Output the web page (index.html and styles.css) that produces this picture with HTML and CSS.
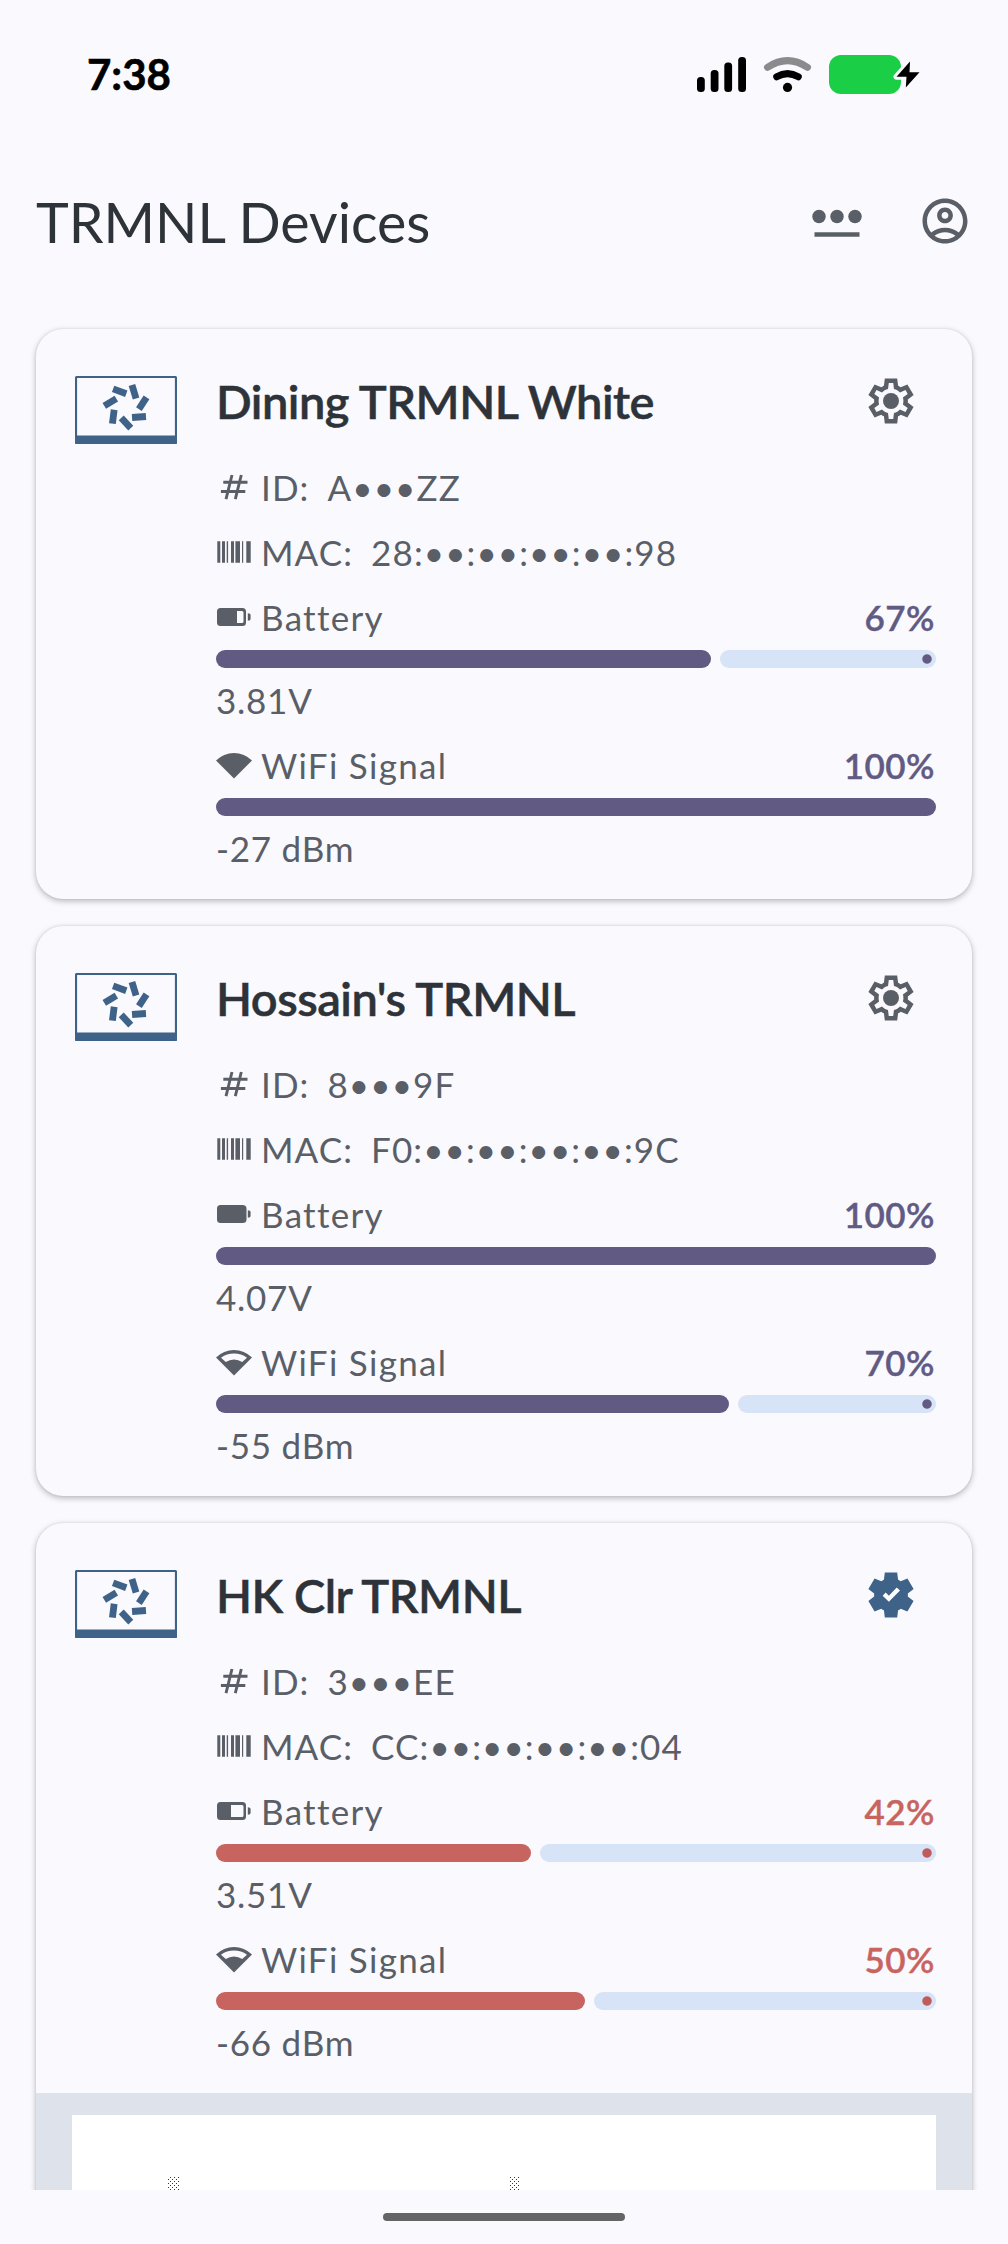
FILE: index.html
```html
<!DOCTYPE html>
<html lang="en">
<head>
<meta charset="utf-8">
<title>TRMNL Devices</title>
<link rel="stylesheet" href="styles.css">
</head>
<body>
<svg class="defs" aria-hidden="true">
  <defs>
    <symbol id="device" viewBox="0 0 102 68">
      <rect x="1" y="1" width="100" height="66" rx="1" fill="none" stroke="currentColor" stroke-width="2.2"/>
      <rect x="0" y="59.5" width="102" height="8.5" rx="1"/>
      <rect x="-7" y="-3.4" width="14" height="6.8" transform="translate(44.7 15.3) rotate(20)"/>
      <rect x="-7" y="-3.4" width="14" height="6.8" transform="translate(59 15.7) rotate(73)"/>
      <rect x="-7" y="-3.4" width="14" height="6.8" transform="translate(67.7 27.3) rotate(123)"/>
      <rect x="-7" y="-3.4" width="14" height="6.8" transform="translate(64 41) rotate(176)"/>
      <rect x="-7" y="-3.4" width="14" height="6.8" transform="translate(51 47) rotate(227)"/>
      <rect x="-7" y="-3.4" width="14" height="6.8" transform="translate(38.3 40.7) rotate(277)"/>
      <rect x="-7" y="-3.4" width="14" height="6.8" transform="translate(35.3 26.3) rotate(329)"/>
    </symbol>
    <symbol id="gear" viewBox="0 -960 960 960">
      <path d="m370-80-16-128q-13-5-24.500-12T307-235l-119 50L78-375l103-78q-1-7-1-13.500v-27q0-6.500 1-13.500L78-585l110-190 119 50q11-8 23-15t24-12l16-128h220l16 128q13 5 24.500 12t22.500 15l119-50 110 190-103 78q1 7 1 13.500v27q0 6.500-2 13.500l103 78-110 190-118-50q-11 8-23 15t-24 12L590-80H370Zm70-80h79l14-106q31-8 57.500-23.500T639-327l99 41 39-68-86-65q5-14 7-29.500t2-31.500q0-16-2-31.500t-7-29.500l86-65-39-68-99 42q-22-23-48.500-38.500T533-694l-13-106h-79l-14 106q-31 8-57.500 23.500T321-633l-99-41-39 68 86 64q-5 15-7 30t-2 32q0 16 2 31t7 30l-86 65 39 68 99-42q22 23 48.500 38.500T427-266l13 106Z"/>
      <circle cx="480" cy="-480" r="142"/>
    </symbol>
    <symbol id="gear-check" viewBox="0 -960 960 960">
      <path d="m370-80-16-128q-13-5-24.500-12T307-235l-119 50L78-375l103-78q-1-7-1-13.500v-27q0-6.500 1-13.500L78-585l110-190 119 50q11-8 23-15t24-12l16-128h220l16 128q13 5 24.500 12t22.500 15l119-50 110 190-103 78q1 7 1 13.500v27q0 6.500-2 13.500l103 78-110 190-118-50q-11 8-23 15t-24 12L590-80H370Z"/>
      <path class="check" d="M332-468l54-56 56 56 140-146 58 54-198 202z"/>
    </symbol>
    <symbol id="tag" viewBox="0 0 36 36">
      <path d="M7.300 13.200H31.500M4.900 22.500H29.300M16 6L10 30.200M25.300 6L19.300 30.200" fill="none" stroke="currentColor" stroke-width="2.900"/>
    </symbol>
    <symbol id="barcode" viewBox="0 0 36 36">
      <path d="M1.300 7.300h3v21.500h-3zM6 7.300h3v21.500H6zM10.700 7.300h1.400v21.500h-1.400zM15 7.300h3v21.500h-3zM19.400 7.300h4.600v21.500h-4.600zM26 7.300h1.200v21.500H26zM30.300 7.300h4.400v21.500h-4.400z"/>
    </symbol>
    <symbol id="bat-67" viewBox="0 0 36 36">
      <path fill-rule="evenodd" d="M4.500 9H26.500q3.500 0 3.500 3.500V23.500q0 3.500-3.500 3.500H4.500q-3.500 0-3.500-3.500V12.500q0-3.500 3.500-3.500zM21 12V24H26q1.500 0 1.500-1.500V13.500q0-1.500-1.500-1.500z"/>
      <path d="M31.800 14.300q2.800 0 2.800 2.200V19.500q0 2.200-2.800 2.200z"/>
    </symbol>
    <symbol id="bat-100" viewBox="0 0 36 36">
      <path d="M4.500 9H26.500q4 0 4 3.500V23.500q0 3.500-4 3.500H4.500q-3.500 0-3.500-3.500V12.500q0-3.500 3.500-3.500z"/>
      <path d="M31.800 14.300q2.800 0 2.800 2.200V19.500q0 2.200-2.800 2.200z"/>
    </symbol>
    <symbol id="bat-42" viewBox="0 0 36 36">
      <path fill-rule="evenodd" d="M4.500 9H26.500q3.500 0 3.500 3.500V23.500q0 3.500-3.500 3.500H4.500q-3.500 0-3.500-3.500V12.500q0-3.500 3.500-3.500zM15 12V24H26q1.500 0 1.500-1.500V13.500q0-1.500-1.500-1.500z"/>
      <path d="M31.800 14.300q2.800 0 2.800 2.200V19.500q0 2.200-2.800 2.200z"/>
    </symbol>
    <symbol id="wifi-full" viewBox="0 0 36 36">
      <path d="M0 13.500A25.500 25.500 0 0 1 36 13.500L18 31.500z"/>
    </symbol>
    <symbol id="wifi-mid" viewBox="0 0 36 36">
      <path fill-rule="evenodd" d="M0 13.500A25.500 25.500 0 0 1 36 13.500L18 31.500zM5 13.700L9.800 18A14.500 14.500 0 0 1 26.200 18L31 13.700A22.500 22.500 0 0 0 5 13.700z"/>
    </symbol>
    <symbol id="users-key" viewBox="0 0 24 24">
      <circle cx="4" cy="10" r="3"/><circle cx="12" cy="10" r="3"/><circle cx="20" cy="10" r="3"/><path d="M2 17h20v2H2z"/>
    </symbol>
    <symbol id="account" viewBox="0 0 24 24">
      <path d="M12 2C6.480 2 2 6.480 2 12s4.480 10 10 10 10-4.480 10-10S17.520 2 12 2zM7.350 18.500C8.660 17.560 10.260 17 12 17s3.340.56 4.650 1.500C15.340 19.440 13.740 20 12 20s-3.340-.56-4.650-1.500zm10.790-1.380C16.450 15.800 14.320 15 12 15s-4.450.8-6.140 2.120C4.700 15.730 4 13.950 4 12c0-4.420 3.580-8 8-8s8 3.580 8 8c0 1.950-.7 3.730-1.860 5.120z"/>
      <path d="M12 6c-1.930 0-3.500 1.570-3.500 3.500S10.070 13 12 13s3.500-1.570 3.500-3.500S13.930 6 12 6zm0 5c-.83 0-1.500-.67-1.500-1.500S11.170 8 12 8s1.500.67 1.500 1.500S12.830 11 12 11z"/>
    </symbol>
    <pattern id="dither" width="4" height="4" patternUnits="userSpaceOnUse">
      <path d="M0 0h1v1H0zM2 2h1v1H2z" fill="#333"/>
    </pattern>
  </defs>
</svg>

<div class="screen">
  <div class="status">
    <span class="time">7:38</span>
    <svg class="status-icons" viewBox="697 50 224 48">
      <rect x="697" y="77" width="7.800" height="15" rx="3.500"/>
      <rect x="710.700" y="70" width="7.800" height="22" rx="3.500"/>
      <rect x="724.300" y="62.500" width="7.800" height="29.500" rx="3.500"/>
      <rect x="738.200" y="57" width="7.800" height="35" rx="3.500"/>
      <path d="M767.500 67.300Q787.500 54 807.500 67.300" fill="none" stroke="#8b8a8d" stroke-width="7" stroke-linecap="round"/>
      <path d="M776.700 76.800Q787.500 70.500 798.300 76.800" fill="none" stroke="#000" stroke-width="7" stroke-linecap="round"/>
      <circle cx="787.500" cy="87.400" r="4.600"/>
      <rect x="829" y="55" width="72" height="39" rx="12" fill="#1ace46"/>
      <path d="M910 61.500L896.500 76.800H906.500L905.800 87.500L919.500 72.200H909.500z" fill="#000" stroke="#faf9fe" stroke-width="6" stroke-linejoin="round" paint-order="stroke"/>
    </svg>
  </div>

  <header class="bar">
    <h1>TRMNL Devices</h1>
    <svg class="action"><use href="#users-key"/></svg>
    <svg class="action"><use href="#account"/></svg>
  </header>

  <main class="list">
    <article class="card">
      <div class="card-main">
        <svg class="device"><use href="#device"/></svg>
        <div class="info">
          <div class="head"><h2>Dining TRMNL White</h2><svg class="settings"><use href="#gear"/></svg></div>
          <div class="row"><svg class="ic"><use href="#tag"/></svg><span>ID:</span><span class="value">A•••ZZ</span></div>
          <div class="row"><svg class="ic"><use href="#barcode"/></svg><span>MAC:</span><span class="value">28:••:••:••:••:98</span></div>
          <div class="meter">
            <div class="row"><svg class="ic"><use href="#bat-67"/></svg><span class="label">Battery</span><b class="pct">67%</b></div>
            <div class="progress"><i class="fill" style="width:495px"></i><i class="track"></i></div>
            <div class="row reading">3.81V</div>
          </div>
          <div class="meter">
            <div class="row"><svg class="ic"><use href="#wifi-full"/></svg><span class="label">WiFi Signal</span><b class="pct">100%</b></div>
            <div class="progress"><i class="fill" style="width:720px"></i></div>
            <div class="row reading">-27 dBm</div>
          </div>
        </div>
      </div>
    </article>

    <article class="card">
      <div class="card-main">
        <svg class="device"><use href="#device"/></svg>
        <div class="info">
          <div class="head"><h2>Hossain's TRMNL</h2><svg class="settings"><use href="#gear"/></svg></div>
          <div class="row"><svg class="ic"><use href="#tag"/></svg><span>ID:</span><span class="value">8•••9F</span></div>
          <div class="row"><svg class="ic"><use href="#barcode"/></svg><span>MAC:</span><span class="value">F0:••:••:••:••:9C</span></div>
          <div class="meter">
            <div class="row"><svg class="ic"><use href="#bat-100"/></svg><span class="label">Battery</span><b class="pct">100%</b></div>
            <div class="progress"><i class="fill" style="width:720px"></i></div>
            <div class="row reading">4.07V</div>
          </div>
          <div class="meter">
            <div class="row"><svg class="ic"><use href="#wifi-mid"/></svg><span class="label">WiFi Signal</span><b class="pct">70%</b></div>
            <div class="progress"><i class="fill" style="width:513px"></i><i class="track"></i></div>
            <div class="row reading">-55 dBm</div>
          </div>
        </div>
      </div>
    </article>

    <article class="card low">
      <div class="card-main">
        <svg class="device"><use href="#device"/></svg>
        <div class="info">
          <div class="head"><h2>HK Clr TRMNL</h2><svg class="settings verified"><use href="#gear-check"/></svg></div>
          <div class="row"><svg class="ic"><use href="#tag"/></svg><span>ID:</span><span class="value">3•••EE</span></div>
          <div class="row"><svg class="ic"><use href="#barcode"/></svg><span>MAC:</span><span class="value">CC:••:••:••:••:04</span></div>
          <div class="meter">
            <div class="row"><svg class="ic"><use href="#bat-42"/></svg><span class="label">Battery</span><b class="pct">42%</b></div>
            <div class="progress"><i class="fill" style="width:315px"></i><i class="track"></i></div>
            <div class="row reading">3.51V</div>
          </div>
          <div class="meter">
            <div class="row"><svg class="ic"><use href="#wifi-mid"/></svg><span class="label">WiFi Signal</span><b class="pct">50%</b></div>
            <div class="progress"><i class="fill" style="width:369px"></i><i class="track"></i></div>
            <div class="row reading">-66 dBm</div>
          </div>
        </div>
      </div>
      <div class="preview">
        <svg class="preview-image" viewBox="0 0 864 500">
          <rect x="96" y="62" width="11" height="14" fill="url(#dither)"/>
          <rect x="437" y="62" width="11" height="14" fill="url(#dither)"/>
        </svg>
      </div>
    </article>
  </main>

  <div class="home"><span class="home-bar"></span></div>
</div>
</body>
</html>
```
FILE: styles.css
```css
* { box-sizing: border-box; }

body {
  margin: 0;
  background: #faf9fe;
  color: #5a5f67;
  font-family: Lato, "Noto Sans", sans-serif;
}

svg { display: block; fill: currentColor; flex: none; }
.defs { position: absolute; width: 0; height: 0; }
h1, h2 { margin: 0; color: #2d3338; white-space: nowrap; }

.screen {
  width: 1008px;
  height: 2244px;
  display: flex;
  flex-direction: column;
  overflow: hidden;
}

.status {
  height: 149px;
  flex: none;
  display: flex;
  justify-content: space-between;
  align-items: flex-start;
  padding: 50px 87px 0 87px;
  color: #000;
}
.time { font-size: 42px; font-weight: 700; line-height: 48px; -webkit-text-stroke: .6px currentColor; }
.status-icons { width: 224px; height: 48px; }

.bar {
  height: 144px;
  flex: none;
  display: flex;
  align-items: center;
  gap: 54px;
  padding: 0 36px;
}
h1 { flex: 1; font-size: 55.500px; font-weight: 400; line-height: 64px; padding-top: 1px; }
.action { width: 54px; height: 54px; }

.list {
  flex: 1;
  min-height: 0;
  display: flex;
  flex-direction: column;
  gap: 27px;
  padding: 36px 36px 0;
  overflow: hidden;
}

.card {
  flex: none;
  border-radius: 27px;
  background: #faf9fe;
  box-shadow: 0 2px 6px rgba(0, 0, 0, .27), 0 0 2px rgba(0, 0, 0, .1);
  overflow: hidden;
}
.card-main { height: 570px; display: flex; padding: 45px 36px 0; }
.device { width: 102px; height: 68px; margin: 2px 39px 0 3px; color: #3e6288; }
.info { flex: 1; min-width: 0; display: flex; flex-direction: column; gap: 20px; }

.head { height: 70.500px; display: flex; justify-content: space-between; }
h2 { font-size: 47px; font-weight: 600; line-height: 54px; letter-spacing: -.5px; -webkit-text-stroke: .5px currentColor; }
.settings { width: 54px; height: 54px; margin-right: 18px; }
.verified { color: #3e6288; }
.check { fill: #fff; }

.row {
  height: 45px;
  display: flex;
  align-items: center;
  font-size: 35px;
  line-height: 45px;
  letter-spacing: 1.100px;
  white-space: pre;
}
.label { letter-spacing: 1.300px; }
.reading { letter-spacing: .75px; }
.ic { width: 36px; height: 36px; margin-right: 9px; }
.value { margin-left: 18px; }
.pct { margin-left: auto; padding-right: 1px; color: #615b84; font-weight: 600; letter-spacing: .5px; -webkit-text-stroke: .4px currentColor; }

.meter { display: flex; flex-direction: column; gap: 10px; }
.progress { height: 18px; display: flex; gap: 9px; }
.fill, .track { height: 18px; border-radius: 9px; }
.fill { background: #615b84; }
.track {
  flex: 1;
  background: radial-gradient(circle at calc(100% - 9px) 9px, #615b84 4.200px, #d7e3f6 5.200px);
}
.low .fill { background: #c8645f; }
.low .pct { color: #c8645f; }
.low .track { background: radial-gradient(circle at calc(100% - 9px) 9px, #c05b5b 4.200px, #d7e3f6 5.200px); }

.preview { padding: 22px 36px 36px; background: #dee3eb; }
.preview-image { width: 864px; height: 500px; background: #fff; }

.home { height: 54px; flex: none; display: flex; justify-content: center; padding-top: 23px; }
.home-bar { width: 242px; height: 8px; border-radius: 4px; background: #656567; }
```
